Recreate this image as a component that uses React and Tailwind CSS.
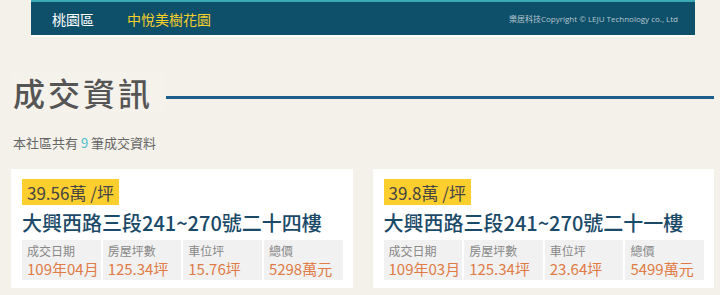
import React from "react";

const font = { fontFamily: '"Noto Sans CJK TC", "Noto Sans", sans-serif' };

const deals = [
  {
    price: "39.56萬 /坪",
    addr: "大興西路三段241~270號二十四樓",
    cells: [
      ["成交日期", "109年04月"],
      ["房屋坪數", "125.34坪"],
      ["車位坪", "15.76坪"],
      ["總價", "5298萬元"],
    ],
  },
  {
    price: "39.8萬 /坪",
    addr: "大興西路三段241~270號二十一樓",
    cells: [
      ["成交日期", "109年03月"],
      ["房屋坪數", "125.34坪"],
      ["車位坪", "23.64坪"],
      ["總價", "5499萬元"],
    ],
  },
];

function Card({ d }) {
  return (
    <div className="bg-white pt-[10px] pb-[10px] pl-[11px] pr-[10px] h-[119px]">
      <div className="flex">
        <div className="bg-[#fcce2e] h-[26px] px-[5px] flex items-center text-[17px] text-[#444] leading-none">
          {d.price}
        </div>
      </div>
      <div className="text-[20px] leading-none text-[#1a4a68] font-medium mt-[5px] h-[26px] flex items-center">
        {d.addr}
      </div>
      <div className="grid grid-cols-4 gap-[2px] mt-[4px]">
        {d.cells.map(([k, v]) => (
          <div key={k} className="bg-[#f1f1f1] h-[40px] pl-[5px] pt-[2px]">
            <div className="text-[12px] leading-[17px] text-[#888]">{k}</div>
            <div className="text-[15px] leading-[20px] text-[#e07b46]">{v}</div>
          </div>
        ))}
      </div>
    </div>
  );
}

export default function App() {
  return (
    <div className="w-[720px] h-[295px] bg-[#f4f1ea] overflow-hidden" style={font}>
      <div className="ml-[31px] w-[664px] border-t-[2px] border-t-[#3aa9b3] border-b-[2px] border-b-white bg-[#0e4f6a] h-[37px] flex items-center">
        <span className="ml-[21px] text-[14px] text-white leading-none">桃園區</span>
        <span className="ml-[33px] text-[14px] text-[#f5cf2a] leading-none">中悅美樹花園</span>
        <span
          className="ml-auto mr-[17px] text-[8px] text-[#b8c8cf] leading-none"
          style={{ fontFamily: '"Open Sans", "Noto Sans CJK TC", sans-serif' }}
        >
          樂居科技Copyright © LEJU Technology co., Ltd
        </span>
      </div>
      <div className="flex items-start mt-[34px]">
        <div className="ml-[11px] w-[155px] h-[42px] bg-[#f5f2ec] pl-[2px] flex items-center">
          <span className="text-[32px] leading-none text-[#555] font-medium tracking-[3px]">成交資訊</span>
        </div>
        <div className="mt-[25px] h-[3px] w-[548px] bg-[#1c5f8d]"></div>
      </div>
      <div className="ml-[13px] mt-[23px] text-[13px] leading-none text-[#666]">
        本社區共有 <span className="text-[#4bbccc]">9</span> 筆成交資料
      </div>
      <div className="ml-[11px] w-[703px] mt-[20px] grid grid-cols-2 gap-[20px]">
        {deals.map((d, i) => (
          <Card key={i} d={d} />
        ))}
      </div>
    </div>
  );
}
